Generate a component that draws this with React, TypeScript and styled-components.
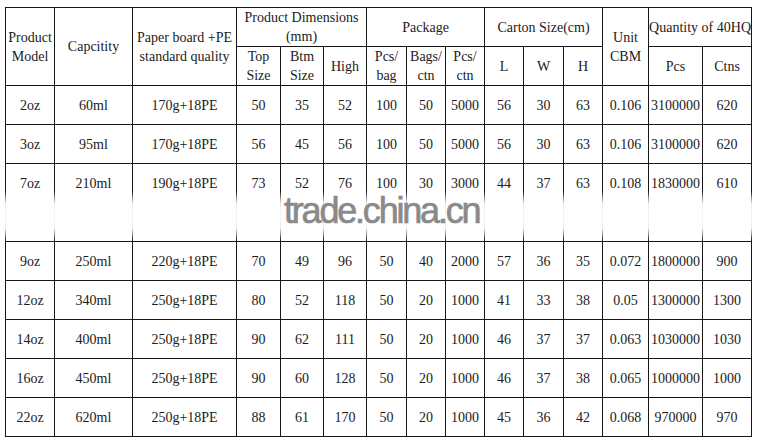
import styled, { createGlobalStyle } from 'styled-components';

const GlobalStyle = createGlobalStyle`
  body {
    margin: 0;
    background: #fff;
    font-family: "Liberation Serif", "Times New Roman", serif;
    color: #1b1b1b;
  }
`;

const Page = styled.div`
  padding: 7px 0 0 5px;
`;

const Frame = styled.div`
  position: relative;
  display: inline-block;
`;

const SpecTable = styled.table`
  border-collapse: collapse;
  table-layout: fixed;
  width: 747px;
  font-size: 14px;
  line-height: 19px;

  td, th {
    border: 1px solid #161616;
    padding: 0;
    text-align: center;
    font-weight: normal;
    white-space: nowrap;
  }
`;

const HeadRow = styled.tr`
  height: 39px;
`;

const BodyRow = styled.tr<{ $tall?: boolean }>`
  height: ${(p) => (p.$tall ? 78 : 39)}px;

  td {
    vertical-align: ${(p) => (p.$tall ? 'top' : 'middle')};
    padding-top: ${(p) => (p.$tall ? 10 : 0)}px;
  }
`;

// white smear the watermark leaves across the lines
const Smear = styled.div`
  position: absolute;
  left: -3px;
  right: -3px;
  top: 184px;
  height: 50px;
  background: linear-gradient(
    to bottom,
    rgba(255, 255, 255, 0) 0%,
    rgba(255, 255, 255, 0.9) 25%,
    rgba(255, 255, 255, 0.97) 50%,
    rgba(255, 255, 255, 0.9) 75%,
    rgba(255, 255, 255, 0) 100%
  );
  pointer-events: none;
`;

const Watermark = styled.div`
  position: absolute;
  left: 279px;
  top: 183px;
  font-family: "Liberation Sans", Arial, sans-serif;
  font-size: 36px;
  letter-spacing: -2.2px;
  color: #8a8a8a;
  -webkit-text-stroke: 0.7px #8a8a8a;
  pointer-events: none;
`;

const widths = [49, 78, 104, 44, 43, 43, 40, 39, 39, 39, 40, 39, 46, 54, 49];

const rows = [
  ['2oz', '60ml', '170g+18PE', '50', '35', '52', '100', '50', '5000', '56', '30', '63', '0.106', '3100000', '620'],
  ['3oz', '95ml', '170g+18PE', '56', '45', '56', '100', '50', '5000', '56', '30', '63', '0.106', '3100000', '620'],
  ['7oz', '210ml', '190g+18PE', '73', '52', '76', '100', '30', '3000', '44', '37', '63', '0.108', '1830000', '610'],
  ['9oz', '250ml', '220g+18PE', '70', '49', '96', '50', '40', '2000', '57', '36', '35', '0.072', '1800000', '900'],
  ['12oz', '340ml', '250g+18PE', '80', '52', '118', '50', '20', '1000', '41', '33', '38', '0.05', '1300000', '1300'],
  ['14oz', '400ml', '250g+18PE', '90', '62', '111', '50', '20', '1000', '46', '37', '37', '0.063', '1030000', '1030'],
  ['16oz', '450ml', '250g+18PE', '90', '60', '128', '50', '20', '1000', '46', '37', '38', '0.065', '1000000', '1000'],
  ['22oz', '620ml', '250g+18PE', '88', '61', '170', '50', '20', '1000', '45', '36', '42', '0.068', '970000', '970'],
];

export default function App() {
  return (
    <Page>
      <GlobalStyle />
      <Frame>
        <SpecTable>
          <colgroup>
            {widths.map((w, i) => (
              <col key={i} style={{ width: w }} />
            ))}
          </colgroup>
          <thead>
            <HeadRow>
              <th rowSpan={2}>Product<br />Model</th>
              <th rowSpan={2}>Capcitity</th>
              <th rowSpan={2}>Paper board +PE<br />standard quality</th>
              <th colSpan={3}>Product Dimensions<br />(mm)</th>
              <th colSpan={3}>Package</th>
              <th colSpan={3}>Carton Size(cm)</th>
              <th rowSpan={2}>Unit<br />CBM</th>
              <th colSpan={2}>Quantity of 40HQ</th>
            </HeadRow>
            <HeadRow>
              <th>Top<br />Size</th>
              <th>Btm<br />Size</th>
              <th>High</th>
              <th>Pcs/<br />bag</th>
              <th>Bags/<br />ctn</th>
              <th>Pcs/<br />ctn</th>
              <th>L</th>
              <th>W</th>
              <th>H</th>
              <th>Pcs</th>
              <th>Ctns</th>
            </HeadRow>
          </thead>
          <tbody>
            {rows.map((r) => (
              <BodyRow key={r[0]} $tall={r[0] === '7oz'}>
                {r.map((c, i) => (
                  <td key={i}>{c}</td>
                ))}
              </BodyRow>
            ))}
          </tbody>
        </SpecTable>
        <Smear />
        <Watermark>trade.china.cn</Watermark>
      </Frame>
    </Page>
  );
}
